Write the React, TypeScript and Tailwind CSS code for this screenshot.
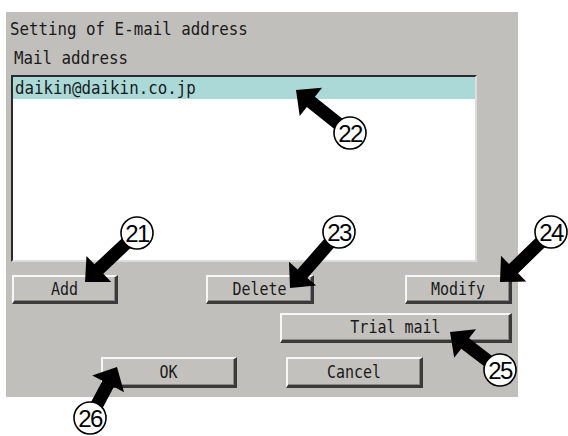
import React from "react";

type Callout = { n: string; tip: [number, number]; c: [number, number] };

const callouts: Callout[] = [
  { n: "22", tip: [296, 90], c: [350, 133] },
  { n: "21", tip: [85, 282], c: [137, 233] },
  { n: "23", tip: [290, 288], c: [339, 232] },
  { n: "24", tip: [500, 282], c: [551, 232] },
  { n: "25", tip: [450, 332], c: [500, 370] },
  { n: "26", tip: [117, 367], c: [90, 418] },
];

function arrowPoints(tip: [number, number], c: [number, number], r: number) {
  const dx = tip[0] - c[0];
  const dy = tip[1] - c[1];
  const len = Math.hypot(dx, dy);
  const ux = dx / len;
  const uy = dy / len;
  const nx = -uy;
  const ny = ux;
  const sx = c[0] + ux * (r - 2);
  const sy = c[1] + uy * (r - 2);
  const hl = 19;
  const hw = 18;
  const sw = 6.5;
  const bx = tip[0] - ux * hl;
  const by = tip[1] - uy * hl;
  const pts = [
    [tip[0], tip[1]],
    [bx + nx * hw, by + ny * hw],
    [bx + nx * sw, by + ny * sw],
    [sx + nx * sw, sy + ny * sw],
    [sx - nx * sw, sy - ny * sw],
    [bx - nx * sw, by - ny * sw],
    [bx - nx * hw, by - ny * hw],
  ];
  return pts.map((p) => `${p[0].toFixed(1)},${p[1].toFixed(1)}`).join(" ");
}

function T({ children }: { children: React.ReactNode }) {
  return <span className="inline-block scale-y-[1.12] origin-center">{children}</span>;
}

function Btn({ label, className }: { label: string; className: string }) {
  return (
    <div
      className={`flex items-center justify-center border-t-2 border-l-2 border-b-[3px] border-r-[3px] border-t-[#f7f7f7] border-l-[#f7f7f7] border-b-[#3a3a3a] border-r-[#3a3a3a] bg-[#c3c1be] shadow-[inset_-1px_-1px_0_#8a8886] text-[15px] text-[#1a1a1a] ${className}`}
    >
      <T>{label}</T>
    </div>
  );
}

export default function App() {
  const r = 16;
  return (
    <div className="relative w-[568px] h-[436px] bg-white overflow-hidden">
      <div
        className="ml-[6px] mt-[12px] w-[512px] h-[385px] bg-[#c1bfbc] flex flex-col text-[#1a1a1a] text-[15.8px]"
        style={{ fontFamily: '"DejaVu Sans Mono", "Liberation Mono", monospace' }}
      >
        <div className="h-[32px] pl-[4px] pt-[7px] leading-[20px]">
          <T>Setting of E-mail address</T>
        </div>
        <div className="mt-[4px] h-[20px] pl-[8px] leading-[20px]">
          <T>Mail address</T>
        </div>
        <div className="mt-[7px] ml-[5px] w-[466px] h-[187px] bg-white border-t-2 border-l-2 border-t-[#2a2a2a] border-l-[#2a2a2a] border-r-2 border-b-2 border-r-[#dcdcdc] border-b-[#dcdcdc]">
          <div className="h-[22px] bg-[#aad9d8] pl-[2px] leading-[22px]">
            <T>daikin@daikin.co.jp</T>
          </div>
        </div>
        <div className="mt-[13px] h-[29px] flex">
          <Btn label="Add" className="ml-[6px] w-[106px] h-[29px]" />
          <Btn label="Delete" className="ml-[88px] w-[108px] h-[29px]" />
          <Btn label="Modify" className="ml-[91px] w-[107px] h-[29px]" />
        </div>
        <div className="mt-[9px] h-[30px] flex">
          <Btn label="Trial mail" className="ml-[274px] w-[232px] h-[30px]" />
        </div>
        <div className="mt-[14px] h-[31px] flex">
          <Btn label="OK" className="ml-[95px] w-[136px] h-[31px]" />
          <Btn label="Cancel" className="ml-[49px] w-[137px] h-[31px]" />
        </div>
      </div>
      <svg className="absolute inset-0 pointer-events-none" width={568} height={436} viewBox="0 0 568 436">
        {callouts.map((co) => (
          <g key={co.n}>
            <polygon points={arrowPoints(co.tip, co.c, r)} fill="#000" />
            <circle cx={co.c[0]} cy={co.c[1]} r={r} fill="#fff" stroke="#000" strokeWidth={1.6} />
            <text
              x={co.c[0]}
              y={co.c[1] + 8.5}
              textAnchor="middle"
              fontSize={24}
              letterSpacing={-1.5}
              fontFamily='"Liberation Sans", Arial, sans-serif'
              fill="#000"
            >
              {co.n}
            </text>
          </g>
        ))}
      </svg>
    </div>
  );
}
